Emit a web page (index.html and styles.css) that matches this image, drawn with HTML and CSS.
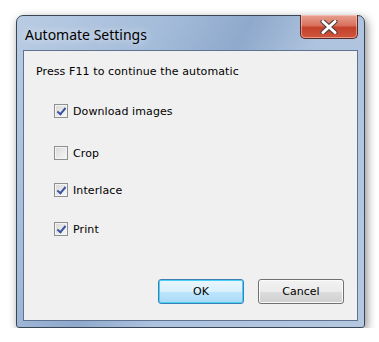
FILE: index.html
```html
<!DOCTYPE html>
<html lang="en">
<head>
  <meta charset="UTF-8" />
  <title>Automate Settings</title>
  <link rel="stylesheet" href="styles.css">
</head>
<body>

<!-- Dialog window -->
<div class="window">
  <div class="titlebar">
    <span class="title">Automate Settings</span>
    <button class="close-btn" aria-label="Close">
      <svg width="20" height="14" viewBox="0 0 20 14">
        <path d="M4 1.5 L16 12.5 M16 1.5 L4 12.5" stroke="#4a3b3b" stroke-width="5" stroke-linecap="round"/>
        <path d="M4 1.5 L16 12.5 M16 1.5 L4 12.5" stroke="#ffffff" stroke-width="3" stroke-linecap="round"/>
      </svg>
    </button>
  </div>

  <div class="client">
    <p class="intro">Press F11 to continue the automatic</p>

    <ul class="options">
      <li class="opt opt-download"><span class="box checked"></span>Download images</li>
      <li class="opt opt-crop"><span class="box"></span>Crop</li>
      <li class="opt opt-interlace"><span class="box checked"></span>Interlace</li>
      <li class="opt opt-print"><span class="box checked"></span>Print</li>
    </ul>

    <div class="actions">
      <button class="btn btn-default">OK</button>
      <button class="btn">Cancel</button>
    </div>
  </div>
</div>

</body>
</html>
```

FILE: styles.css
```css
* {
  box-sizing: border-box;
}

html, body {
  margin: 0;
  padding: 0;
  background-color: #ffffff;
  font-family: Tahoma, "DejaVu Sans", sans-serif;
}

.window {
  position: relative;
  margin: 15px 0 0 16px;
  width: 349px;
  height: 313px;
  border: 1px solid #3a4656;
  border-radius: 7px 7px 3px 3px;
  background: linear-gradient(120deg, #b9cce3 0%, #a3bbd9 30%, #8fa9cc 45%, #aec3de 60%, #b5c8e0 100%);
  box-shadow: 2px 3px 10px rgba(0, 0, 0, 0.45);
  display: flex;
  flex-direction: column;
  padding: 0 6px 6px 6px;
}

.titlebar {
  height: 34px;
  display: flex;
  align-items: center;
  padding-left: 2px;
}

.title {
  font-family: "Noto Sans", sans-serif;
  font-size: 14px;
  color: #000;
  margin-top: 3px;
  text-shadow: 0 0 8px rgba(255, 255, 255, 0.9);
}

.close-btn {
  position: absolute;
  top: -1px;
  right: 6px;
  width: 58px;
  height: 24px;
  border: 1px solid #5a2a26;
  border-top: none;
  border-radius: 0 0 5px 5px;
  background: linear-gradient(#e8a291 0%, #d8715d 45%, #c4412b 55%, #d0563d 100%);
  display: flex;
  align-items: center;
  justify-content: center;
  padding: 0;
  box-shadow: inset 0 0 0 1px rgba(255, 220, 210, 0.5);
}

.client {
  flex: 1;
  background-color: #f0f0f0;
  border: 1px solid #5f7390;
  display: flex;
  flex-direction: column;
  padding: 14px 0 0 12px;
}

.intro {
  margin: 0;
  font-size: 11px;
  letter-spacing: 0.1px;
  color: #000;
}

.options {
  list-style: none;
  margin: 0;
  padding: 0 0 0 18px;
}

.opt {
  display: flex;
  align-items: center;
  height: 14px;
  font-size: 11px;
  letter-spacing: 0.1px;
  color: #000;
}

.opt-download { margin-top: 26px; }
.opt-crop { margin-top: 28px; }
.opt-interlace { margin-top: 23px; }
.opt-print { margin-top: 25px; }

.box {
  width: 14px;
  height: 14px;
  margin-right: 5px;
  border: 1px solid #8e8f8f;
  background: linear-gradient(135deg, #d8d8d8, #f8f8f8);
  box-shadow: inset 0 0 0 1px #f4f4f4;
  position: relative;
}

.box.checked::after {
  content: "";
  position: absolute;
  left: 4px;
  top: 1px;
  width: 3px;
  height: 7px;
  border: solid #3b54a0;
  border-width: 0 2px 2px 0;
  transform: rotate(40deg);
}

.actions {
  margin-top: auto;
  display: flex;
  justify-content: flex-end;
  gap: 14px;
  padding: 0 13px 16px 0;
}

.btn {
  width: 86px;
  height: 25px;
  font-family: Tahoma, "DejaVu Sans", sans-serif;
  font-size: 11px;
  color: #000;
  border: 1px solid #707070;
  border-radius: 3px;
  background: linear-gradient(#f2f2f2 0%, #ebebeb 50%, #dddddd 51%, #cfcfcf 100%);
  box-shadow: inset 0 0 0 1px #fbfbfb;
  padding: 0;
}

.btn-default {
  border-color: #3c7fb1;
  background: linear-gradient(#eaf6fd 0%, #d9f0fc 50%, #bee6fd 51%, #a7d9f5 100%);
  box-shadow: inset 0 0 0 1px #48d0f8;
}
```
